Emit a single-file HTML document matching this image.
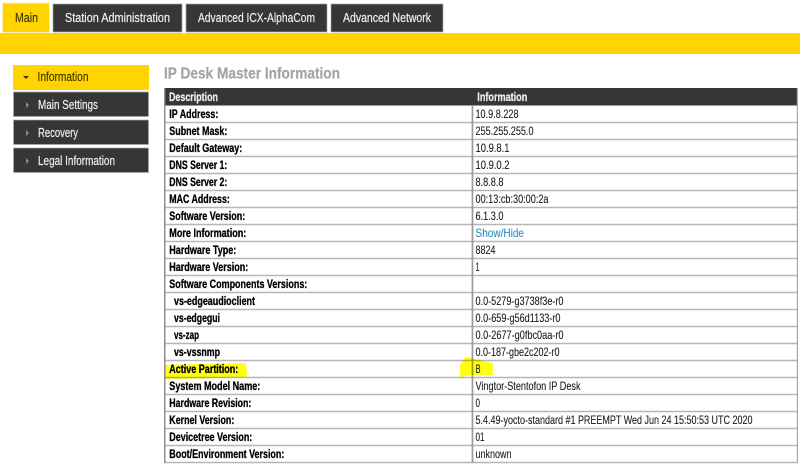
<!DOCTYPE html>
<html>
<head>
<meta charset="utf-8">
<style>
html,body{margin:0;padding:0;background:#fff;width:800px;height:472px;overflow:hidden}
svg{display:block;filter:blur(0.35px)}
text{font-family:"Liberation Sans",Arial,sans-serif;font-size:12px;fill:#1c1c1c;stroke:#1c1c1c;stroke-width:.12px}
.b{font-weight:bold;fill:#000;stroke:#000;stroke-width:.3px}
.h{font-weight:bold;fill:#eee;stroke:#eee;stroke-width:.25px}
.n{font-size:12.5px;fill:#f0f0f0;stroke:#f0f0f0;stroke-width:.18px}
.y{font-size:12.5px;fill:#3d3600;stroke:#3d3600;stroke-width:.15px}
</style>
</head>
<body>
<svg width="800" height="472" viewBox="0 0 800 472" xmlns="http://www.w3.org/2000/svg">
<rect width="800" height="472" fill="#fff"/>

<!-- tabs -->
<rect x="2.5" y="3" width="47" height="29.5" fill="#ffd400" stroke="#ffeeb0"/>
<rect x="53" y="4" width="129" height="28" fill="#363636" stroke="#aaa" stroke-width=".7"/>
<rect x="186" y="4" width="141" height="28" fill="#363636" stroke="#aaa" stroke-width=".7"/>
<rect x="331" y="4" width="112" height="28" fill="#363636" stroke="#aaa" stroke-width=".7"/>
<text class="y" x="15" y="22" textLength="23" lengthAdjust="spacingAndGlyphs">Main</text>
<text class="n" x="65" y="22" textLength="105" lengthAdjust="spacingAndGlyphs">Station Administration</text>
<text class="n" x="198" y="22" textLength="117" lengthAdjust="spacingAndGlyphs">Advanced ICX-AlphaCom</text>
<text class="n" x="343" y="22" textLength="88" lengthAdjust="spacingAndGlyphs">Advanced Network</text>
<rect x="0" y="33" width="800" height="21" fill="#ffd400"/>

<!-- sidebar -->
<rect x="13" y="65" width="136" height="25" fill="#ffd400"/>
<rect x="13.5" y="92" width="135" height="24.5" fill="#363636" stroke="#aaa" stroke-width=".7"/>
<rect x="13.5" y="120" width="135" height="24.5" fill="#363636" stroke="#aaa" stroke-width=".7"/>
<rect x="13.5" y="148" width="135" height="24.5" fill="#363636" stroke="#aaa" stroke-width=".7"/>
<path d="M23 76h6l-3 3z" fill="#3d3600"/>
<path d="M26 102v6l3-3z" fill="#8a8a8a"/>
<path d="M26 130v6l3-3z" fill="#8a8a8a"/>
<path d="M26 158v6l3-3z" fill="#8a8a8a"/>
<text class="y" x="37.5" y="81" textLength="51" lengthAdjust="spacingAndGlyphs">Information</text>
<text class="n" x="38" y="109" textLength="60" lengthAdjust="spacingAndGlyphs">Main Settings</text>
<text class="n" x="38" y="137" textLength="40" lengthAdjust="spacingAndGlyphs">Recovery</text>
<text class="n" x="38" y="165" textLength="77" lengthAdjust="spacingAndGlyphs">Legal Information</text>

<!-- title -->
<text x="164" y="78.5" textLength="176" lengthAdjust="spacingAndGlyphs" style="font-size:16px;font-weight:bold;fill:#a3a3a3;stroke:#a3a3a3;stroke-width:.2px">IP Desk Master Information</text>

<!-- table -->
<rect x="164" y="88" width="634" height="17.5" fill="#363636"/>
<g stroke="#b6b6b6" stroke-width="1.4">
<path d="M164 122.5H798M164 139.5H798M164 156.5H798M164 173.5H798M164 190.5H798M164 207.5H798M164 224.5H798M164 241.5H798M164 258.5H798M164 275.5H798M164 292.5H798M164 309.5H798M164 326.5H798M164 343.5H798M164 360.5H798M164 377.5H798M164 394.5H798M164 411.5H798M164 428.5H798M164 445.5H798M164 462.5H798"/>
</g>
<rect x="164" y="88" width="1.5" height="375" fill="#8e8e8e"/>
<rect x="796.8" y="88" width="1.2" height="375" fill="#a8a8a8"/>
<rect x="471.6" y="105" width="1.7" height="358" fill="#9a9a9a"/>

<!-- highlighter -->
<g style="mix-blend-mode:multiply" fill="#ffff14" stroke="#ffff14" stroke-width="2" stroke-linejoin="round">
<path d="M166 366L200 365L245 364L246 376L200 377.5L166 378Z"/>
<path d="M461 365L466 358L492 364L492 374L472 374L461 376Z"/>
</g>

<text class="h" x="169" y="101" textLength="49" lengthAdjust="spacingAndGlyphs">Description</text>
<text class="h" x="477.3" y="101" textLength="50" lengthAdjust="spacingAndGlyphs">Information</text>

<text class="b" x="169.3" y="118" textLength="49" lengthAdjust="spacingAndGlyphs">IP Address:</text>
<text class="b" x="169.3" y="135" textLength="58" lengthAdjust="spacingAndGlyphs">Subnet Mask:</text>
<text class="b" x="169.3" y="152" textLength="73" lengthAdjust="spacingAndGlyphs">Default Gateway:</text>
<text class="b" x="169.3" y="169" textLength="58" lengthAdjust="spacingAndGlyphs">DNS Server 1:</text>
<text class="b" x="169.3" y="186" textLength="58" lengthAdjust="spacingAndGlyphs">DNS Server 2:</text>
<text class="b" x="169.3" y="203" textLength="60.5" lengthAdjust="spacingAndGlyphs">MAC Address:</text>
<text class="b" x="169.3" y="220" textLength="76" lengthAdjust="spacingAndGlyphs">Software Version:</text>
<text class="b" x="169.3" y="237" textLength="77" lengthAdjust="spacingAndGlyphs">More Information:</text>
<text class="b" x="169.3" y="254" textLength="67" lengthAdjust="spacingAndGlyphs">Hardware Type:</text>
<text class="b" x="169.3" y="271" textLength="79" lengthAdjust="spacingAndGlyphs">Hardware Version:</text>
<text class="b" x="169.3" y="288" textLength="138" lengthAdjust="spacingAndGlyphs">Software Components Versions:</text>
<text class="b" x="174" y="305" textLength="81" lengthAdjust="spacingAndGlyphs">vs-edgeaudioclient</text>
<text class="b" x="174" y="322" textLength="46" lengthAdjust="spacingAndGlyphs">vs-edgegui</text>
<text class="b" x="174" y="339" textLength="25" lengthAdjust="spacingAndGlyphs">vs-zap</text>
<text class="b" x="174" y="356" textLength="46" lengthAdjust="spacingAndGlyphs">vs-vssnmp</text>
<text class="b" x="169.3" y="373" textLength="69" lengthAdjust="spacingAndGlyphs">Active Partition:</text>
<text class="b" x="169.3" y="390" textLength="91" lengthAdjust="spacingAndGlyphs">System Model Name:</text>
<text class="b" x="169.3" y="407" textLength="82" lengthAdjust="spacingAndGlyphs">Hardware Revision:</text>
<text class="b" x="169.3" y="424" textLength="65" lengthAdjust="spacingAndGlyphs">Kernel Version:</text>
<text class="b" x="169.3" y="441" textLength="83" lengthAdjust="spacingAndGlyphs">Devicetree Version:</text>
<text class="b" x="169.3" y="458" textLength="115" lengthAdjust="spacingAndGlyphs">Boot/Environment Version:</text>

<text x="475.5" y="118" textLength="43" lengthAdjust="spacingAndGlyphs">10.9.8.228</text>
<text x="475.5" y="135" textLength="58" lengthAdjust="spacingAndGlyphs">255.255.255.0</text>
<text x="475.5" y="152" textLength="34" lengthAdjust="spacingAndGlyphs">10.9.8.1</text>
<text x="475.5" y="169" textLength="34" lengthAdjust="spacingAndGlyphs">10.9.0.2</text>
<text x="475.5" y="186" textLength="28" lengthAdjust="spacingAndGlyphs">8.8.8.8</text>
<text x="475.5" y="203" textLength="73" lengthAdjust="spacingAndGlyphs">00:13:cb:30:00:2a</text>
<text x="475.5" y="220" textLength="28" lengthAdjust="spacingAndGlyphs">6.1.3.0</text>
<text x="475.5" y="237" textLength="48.5" lengthAdjust="spacingAndGlyphs" style="fill:#2b8fc4;stroke:#2b8fc4">Show/Hide</text>
<text x="475.5" y="254" textLength="20" lengthAdjust="spacingAndGlyphs">8824</text>
<text x="475.5" y="271" textLength="4" lengthAdjust="spacingAndGlyphs">1</text>
<text x="475.5" y="305" textLength="88" lengthAdjust="spacingAndGlyphs">0.0-5279-g3738f3e-r0</text>
<text x="475.5" y="322" textLength="85" lengthAdjust="spacingAndGlyphs">0.0-659-g56d1133-r0</text>
<text x="475.5" y="339" textLength="88" lengthAdjust="spacingAndGlyphs">0.0-2677-g0fbc0aa-r0</text>
<text x="475.5" y="356" textLength="84" lengthAdjust="spacingAndGlyphs">0.0-187-gbe2c202-r0</text>
<text x="475.5" y="373" textLength="5" lengthAdjust="spacingAndGlyphs">B</text>
<text x="475.5" y="390" textLength="105" lengthAdjust="spacingAndGlyphs">Vingtor-Stentofon IP Desk</text>
<text x="475.5" y="407" textLength="4.5" lengthAdjust="spacingAndGlyphs">0</text>
<text x="475.5" y="424" textLength="277" lengthAdjust="spacingAndGlyphs">5.4.49-yocto-standard #1 PREEMPT Wed Jun 24 15:50:53 UTC 2020</text>
<text x="475.5" y="441" textLength="9" lengthAdjust="spacingAndGlyphs">01</text>
<text x="475.5" y="458" textLength="36" lengthAdjust="spacingAndGlyphs">unknown</text>
</svg>
</body>
</html>
